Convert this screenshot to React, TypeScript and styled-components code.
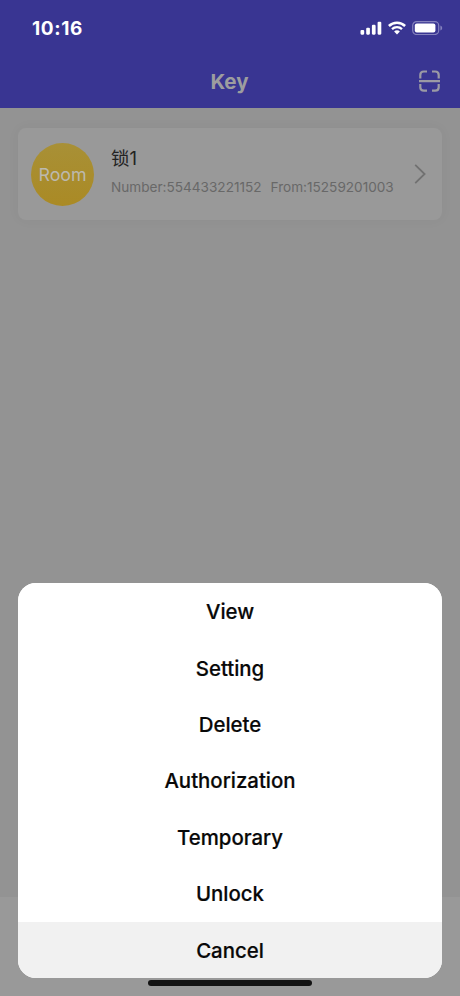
import React from "react";
import styled, { createGlobalStyle } from "styled-components";

const GlobalStyle = createGlobalStyle`
  * { box-sizing: border-box; }
  body { margin: 0; background: #939393; }
`;

const Screen = styled.div`
  position: relative;
  display: flex;
  flex-direction: column;
  width: 460px;
  height: 996px;
  overflow: hidden;
  background: #939393;
  font-family: Inter, "Noto Sans CJK SC", sans-serif;
`;

const Header = styled.header`
  flex: none;
  height: 108px;
  background: #393592;
`;

const StatusBar = styled.div`
  display: flex;
  align-items: center;
  justify-content: space-between;
  height: 56px;
  padding: 0 17px 0 32px;
`;

const Time = styled.span`
  padding-top: 1px;
  color: #fff;
  font-size: 19px;
  font-weight: 700;
  line-height: 22px;
  letter-spacing: 0.6px;
`;

const StatusIcons = styled.div`
  display: flex;
  align-items: center;
  gap: 6px;
  svg { display: block; }
`;

const TitleBar = styled.div`
  display: grid;
  grid-template-columns: 1fr auto 1fr;
  align-items: center;
  height: 50px;
  padding: 0 20px 0 19px;
`;

const Title = styled.h1`
  grid-column: 2;
  margin: 0;
  padding-top: 2px;
  color: #9d9d9f;
  font-size: 20.5px;
  font-weight: 700;
  line-height: 26px;
`;

const ScanButton = styled.button`
  justify-self: end;
  padding: 0;
  border: 0;
  background: none;
  svg { display: block; }
`;

const Content = styled.main`
  flex: 1;
  padding: 20px 18px;
`;

const Card = styled.article`
  display: flex;
  align-items: center;
  height: 92px;
  padding: 0 16px 0 13px;
  border-radius: 8px;
  background: #999;
  box-shadow: 0 0 14px rgba(0, 0, 0, 0.035);
`;

const Avatar = styled.div`
  display: flex;
  align-items: center;
  justify-content: center;
  flex: none;
  width: 63px;
  height: 63px;
  border-radius: 50%;
  background: linear-gradient(#a89036, #aa8a25);
  color: #bcb9ae;
  font-size: 17.8px;
`;

const Info = styled.div`
  flex: 1;
  margin-left: 17px;
  padding-bottom: 7px;
  white-space: nowrap;
`;

const Name = styled.div`
  color: #232323;
  font-size: 18.5px;
  line-height: 26px;
`;

const Meta = styled.div`
  display: flex;
  gap: 9px;
  margin-top: 7px;
  color: #686868;
  font-size: 13.6px;
  line-height: 18px;
`;

const HomeArea = styled.footer`
  flex: none;
  height: 99px;
  background: #999;
`;

const Sheet = styled.div`
  position: absolute;
  left: 18px;
  right: 18px;
  bottom: 18px;
  display: grid;
  grid-template-rows: repeat(7, 1fr);
  height: 395px;
  overflow: hidden;
  border-radius: 18px;
  background: #fff;
`;

const Action = styled.button<{ $muted?: boolean }>`
  padding: 2px 0 0;
  border: 0;
  background: ${(p) => (p.$muted ? "#f1f1f1" : "#fff")};
  color: #080808;
  font-family: inherit;
  font-size: 20.4px;
  font-weight: 500;
  line-height: 26px;
  -webkit-text-stroke: 0.2px #080808;
`;

const HomeIndicator = styled.div`
  position: absolute;
  bottom: 10px;
  left: 148px;
  width: 164px;
  height: 6px;
  border-radius: 3px;
  background: #131313;
`;

const actions = ["View", "Setting", "Delete", "Authorization", "Temporary", "Unlock", "Cancel"];

const Signal = () => (
  <svg width="22" height="14" viewBox="0 0 22 14" fill="#fff">
    <rect x="0.5" y="9" width="3.7" height="4.7" rx="1.1" />
    <rect x="6.2" y="6.7" width="3.7" height="7" rx="1.1" />
    <rect x="11.9" y="3.8" width="3.7" height="9.9" rx="1.1" />
    <rect x="17.6" y="0.7" width="3.7" height="13" rx="1.1" />
  </svg>
);

const Wifi = () => (
  <svg width="18" height="14" viewBox="0 0 18 14" fill="none" stroke="#fff">
    <path d="M0.9 5C5.4 0.6 12.6 0.6 17.1 5" strokeWidth="2.5" />
    <path d="M4 8.2C6.8 5.5 11.2 5.5 14 8.2" strokeWidth="2.3" />
    <path d="M9 13.4 6.1 10.4C7.7 8.9 10.3 8.9 11.9 10.4Z" fill="#fff" stroke="none" />
  </svg>
);

const Battery = () => (
  <svg width="31" height="14" viewBox="0 0 31 14">
    <rect x="0.7" y="0.6" width="26" height="12.9" rx="3.9" fill="none" stroke="#8582bd" strokeWidth="1.2" />
    <rect x="2.8" y="2.6" width="20.6" height="9" rx="2" fill="#fff" />
    <path d="M28.4 4.6C30.8 5.4 30.8 8.8 28.4 9.6Z" fill="#8582bd" />
  </svg>
);

const Scan = () => (
  <svg width="21" height="22" viewBox="0 0 21 22" fill="none" stroke="#9b9aa5" strokeWidth="2.2">
    <path d="M1.3 8.5V5Q1.3 1.5 4.8 1.5H8M13 1.5H16.2Q19.7 1.5 19.7 5V8.5M19.7 14V17.2Q19.7 20.7 16.2 20.7H13M8 20.7H4.8Q1.3 20.7 1.3 17.2V14M0 11.2H21" />
  </svg>
);

const Chevron = () => (
  <svg width="12" height="20" viewBox="0 0 12 20" fill="none" stroke="#717171" strokeWidth="1.8">
    <path d="M1.2 0.8 10.6 10 1.2 19.2" />
  </svg>
);

export default function App() {
  return (
    <>
      <GlobalStyle />
      <Screen>
        <Header>
          <StatusBar>
            <Time>10:16</Time>
            <StatusIcons>
              <Signal />
              <Wifi />
              <Battery />
            </StatusIcons>
          </StatusBar>
          <TitleBar>
            <Title>Key</Title>
            <ScanButton aria-label="Scan">
              <Scan />
            </ScanButton>
          </TitleBar>
        </Header>
        <Content>
          <Card>
            <Avatar>Room</Avatar>
            <Info>
              <Name>锁1</Name>
              <Meta>
                <span>Number:554433221152</span>
                <span>From:15259201003</span>
              </Meta>
            </Info>
            <Chevron />
          </Card>
        </Content>
        <HomeArea />
        <Sheet role="menu">
          {actions.map((label) => (
            <Action key={label} role="menuitem" $muted={label === "Cancel"}>
              {label}
            </Action>
          ))}
        </Sheet>
        <HomeIndicator />
      </Screen>
    </>
  );
}
